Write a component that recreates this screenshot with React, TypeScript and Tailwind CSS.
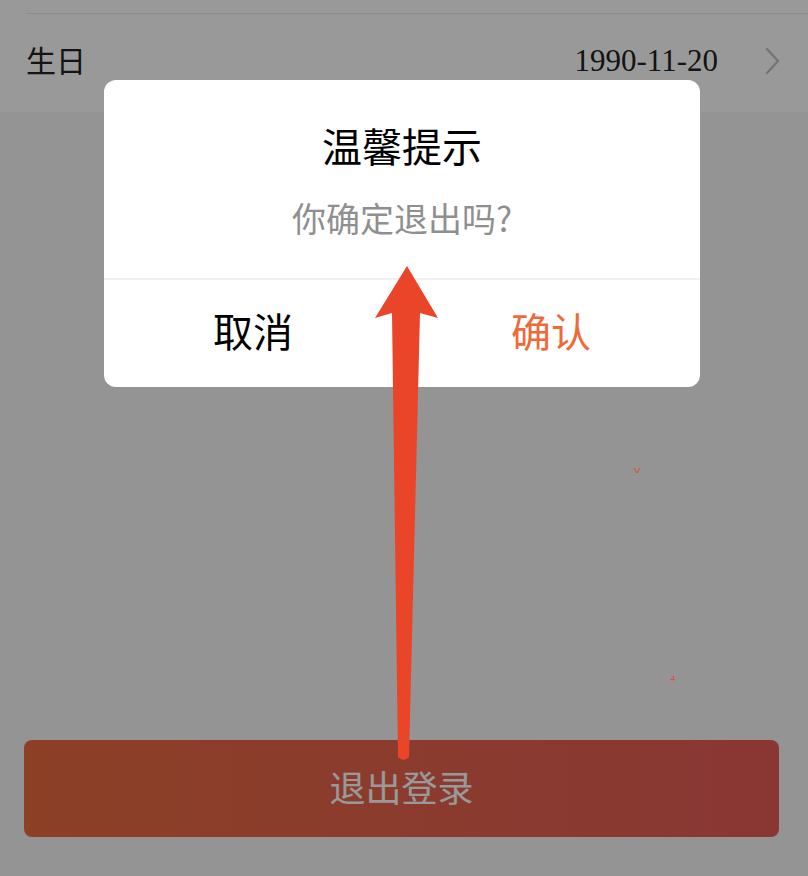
import React from "react";

const cjkSans = { fontFamily: '"Noto Sans CJK SC", "Noto Sans", sans-serif' };
const cjkSerif = { fontFamily: '"Liberation Serif", "Noto Sans CJK SC", serif' };

function Chevron() {
  return (
    <svg width="16" height="28" viewBox="0 0 16 28" fill="none">
      <path d="M2 2 L13 14 L2 26" stroke="#c4c4c4" strokeWidth="2.4" strokeLinecap="round" />
    </svg>
  );
}

function ConfirmDialog() {
  return (
    <div className="absolute left-[104px] top-[80px] w-[596px] overflow-hidden rounded-[12px] bg-white">
      <div className="flex h-[198px] flex-col items-center">
        <div className="mt-[41px] text-[40px] leading-[48px] text-black" style={cjkSans}>
          温馨提示
        </div>
        <div className="mt-[28px] text-[34px] leading-[42px] text-[#8f8f8f]" style={cjkSans}>
          你确定退出吗?
        </div>
      </div>
      <div className="flex h-[109px] border-t-2 border-[#f0f0f0] pb-[8px]">
        <button type="button" className="flex flex-1 items-center justify-center text-[40px] text-black" style={cjkSans}>
          取消
        </button>
        <button type="button" className="flex flex-1 items-center justify-center text-[40px] text-[#f06a38]" style={cjkSans}>
          确认
        </button>
      </div>
    </div>
  );
}

function Arrow() {
  return (
    <svg className="pointer-events-none absolute left-0 top-0" width="808" height="876" viewBox="0 0 808 876">
      <path
        d="M398 757 L392 313 L375 318 L407 266 L438 318 L420 313 L409 757 Q403 763 398 757 Z"
        fill="#ea4429"
      />
      <path d="M634 468 L637 473 L640 468" stroke="#ea4429" strokeWidth="1" fill="none" />
      <path d="M670 679 L674 680 L673 676" stroke="#ea4429" strokeWidth="1" fill="none" />
    </svg>
  );
}

export default function App() {
  return (
    <div className="relative flex h-[876px] w-[808px] flex-col overflow-hidden bg-[#f7f7f7]">
      <div className="bg-white">
        <div className="h-[13px]" />
        <div className="ml-[26px] flex h-[99px] items-center justify-between border-t border-[#ececec] pb-[4px] pr-[27px]">
          <span className="text-[30px] text-[#222]" style={cjkSerif}>
            生日
          </span>
          <div className="flex items-center gap-[47px]">
            <span className="text-[31px] text-[#222]" style={cjkSerif}>
              1990-11-20
            </span>
            <Chevron />
          </div>
        </div>
      </div>
      <div className="flex-1" />
      <button
        type="button"
        className="mb-[39px] ml-[24px] mr-[29px] flex h-[97px] items-center justify-center rounded-[8px] bg-gradient-to-r from-[#e96b3f] to-[#e65c57] pb-[6px] text-[36px] text-white"
        style={cjkSans}
      >
        退出登录
      </button>

      <div className="absolute inset-0 bg-black/40" />
      <ConfirmDialog />
      <Arrow />
    </div>
  );
}
